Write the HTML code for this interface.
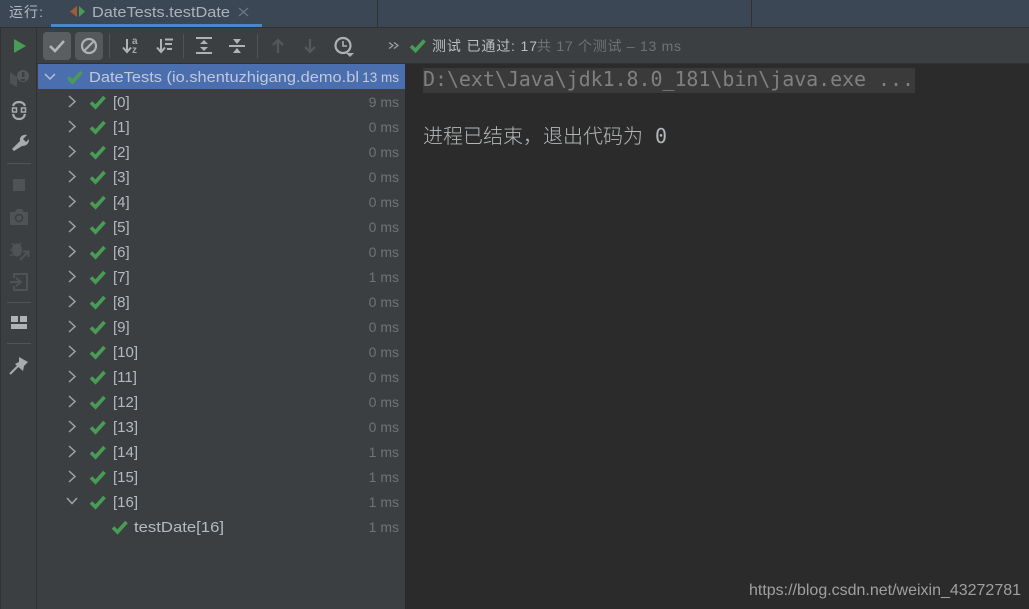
<!DOCTYPE html>
<html><head><meta charset="utf-8"><style>
html,body{margin:0;padding:0;background:#2b2b2b;width:1029px;height:609px;overflow:hidden}
svg{display:block}
text{font-family:"Liberation Sans","Noto Sans CJK SC",sans-serif}
.t{font-size:15px;fill:#b4bac0}
.m{font-size:14px;fill:#6f7375;text-anchor:end}
</style></head><body>
<svg width="1029" height="609" viewBox="0 0 1029 609" xmlns="http://www.w3.org/2000/svg">
<defs>
<path id="c" d="M-7 0.5L-2.5 5L6.5 -5" fill="none" stroke="#499c54" stroke-width="3.6"/>
<path id="r" d="M-3 -5L3 0.5L-3 6" fill="none" stroke="#a0a3a5" stroke-width="1.5"/>
</defs>
<rect width="1029" height="609" fill="#2b2b2b"/>
<!-- header -->
<rect width="1029" height="27" fill="#3c4756"/>
<rect x="51" y="24" width="211" height="3" fill="#4a88c7"/>
<rect x="377" y="0" width="1" height="27" fill="#323232"/>
<rect x="751" y="0" width="1" height="27" fill="#323232"/>
<rect y="27" width="1029" height="1" fill="#323232"/>
<text x="9" y="17" font-size="14" fill="#b4bac0" textLength="34">运行:</text>
<path d="M77 6L70 11.500L77 17Z" fill="#a3593a"/>
<path d="M79 6L85 11.500L79 17Z" fill="#499c54"/>
<text x="92" y="17" font-size="15" fill="#a9b2bb" textLength="138" lengthAdjust="spacingAndGlyphs">DateTests.testDate</text>
<path d="M239 8L248 16M248 8L239 16" stroke="#6b7782" stroke-width="1.200"/>
<!-- panels -->
<rect y="28" width="405" height="581" fill="#3c3f41"/>
<rect x="405" y="28" width="624" height="36" fill="#3c3f41"/>
<rect x="36" y="28" width="1" height="581" fill="#2f3133"/>
<rect x="37" y="63" width="992" height="1" fill="#323232"/>
<rect x="0" y="28" width="1" height="581" fill="#323232"/>
<!-- left rail -->
<path d="M14 39V53L26 46Z" fill="#499c54"/>
<path d="M10 72L17 77V87L10 83Z" fill="#4f5253"/>
<circle cx="23" cy="76" r="6" fill="#55585a"/><rect x="22" y="72" width="2.500" height="5" fill="#3c3f41"/><rect x="21" y="79" width="4" height="2" fill="#3c3f41"/>
<g fill="none" stroke="#a8abad" stroke-width="2.200"><path d="M13 106C14 103 16 102 19 102C22 102 24 103 25 106"/><path d="M13 114C14 118 16 119 19 119C22 119 24 118 25 114"/></g>
<rect x="12.500" y="108" width="4" height="4" fill="none" stroke="#a8abad" stroke-width="1.500"/><rect x="21.500" y="108" width="4" height="4" fill="none" stroke="#a8abad" stroke-width="1.500"/>
<path d="M12 149L20 141C19 137 23 134 27 135L23 139L26 142L29 139C29 144 26 146 22 146L14 151Z" fill="#a8abad"/>
<rect x="7" y="163" width="24" height="1" fill="#515456"/>
<rect x="13" y="179" width="12" height="12" fill="#505355"/>
<path d="M10 212H15L17 209H22L24 212H28V225H10Z" fill="#505355"/><circle cx="19" cy="218" r="3.500" fill="none" stroke="#3c3f41" stroke-width="1.500"/>
<ellipse cx="17" cy="250" rx="5" ry="6.500" fill="#505355"/><path d="M12 243L14 246M21 243L19 246M10 250H13M10 255H13" stroke="#505355" stroke-width="1.500"/><path d="M20 260L28 252M23 251.500H28.500V257" fill="none" stroke="#505355" stroke-width="2"/>
<path d="M14 278V274H27V290H14V286" fill="none" stroke="#505355" stroke-width="2"/><path d="M10 282H19M16 278L21 282L16 286" fill="none" stroke="#505355" stroke-width="2"/>
<rect x="7" y="302" width="24" height="1" fill="#515456"/>
<path d="M11 316H18V322H11ZM20 316H27V322H20ZM11 324H27V329H11Z" fill="#b0b3b5"/>
<rect x="7" y="343" width="24" height="1" fill="#515456"/>
<path d="M19 357L28 362L24 366L23 371L15 364L19 362Z" fill="#a8abad"/><path d="M10 374L18 366" stroke="#a8abad" stroke-width="2"/>
<!-- toolbar -->
<rect x="43" y="32" width="28" height="28" rx="4" fill="#5b5e60"/>
<rect x="75" y="32" width="28" height="28" rx="4" fill="#56595b"/>
<path d="M50 46L55 51L64 41" fill="none" stroke="#b4b7b9" stroke-width="2.500"/>
<circle cx="89" cy="46" r="7" fill="none" stroke="#aeb1b3" stroke-width="2.200"/><path d="M84.500 50.500L93.500 41.500" stroke="#aeb1b3" stroke-width="2.200"/>
<rect x="109" y="34" width="1" height="24" fill="#515456"/>
<g fill="none" stroke="#b0b3b5" stroke-width="2"><path d="M127 39V52M123 47.500L127 52L131 47.500"/><path d="M161 39V52M157 47.500L161 52L165 47.500"/></g>
<text x="132" y="44" font-size="10" font-weight="bold" fill="#a5a8aa">a</text><text x="132" y="53" font-size="10" font-weight="bold" fill="#a5a8aa">z</text>
<path d="M165 39.500H173M165 44H172M167 49H172" stroke="#b0b3b5" stroke-width="2" fill="none"/>
<rect x="183" y="34" width="1" height="24" fill="#515456"/>
<path d="M196 38H212M196 53H212" stroke="#b0b3b5" stroke-width="2"/><path d="M200 44L204 40L208 44ZM200 47L204 51L208 47Z" fill="#b0b3b5"/>
<path d="M229 46H245" stroke="#b0b3b5" stroke-width="2"/><path d="M233 39H241L237 44ZM233 53H241L237 48Z" fill="#b0b3b5"/>
<rect x="257" y="34" width="1" height="24" fill="#515456"/>
<g fill="none" stroke="#55585a" stroke-width="2.200"><path d="M278 53V40M273 45L278 40L283 45"/><path d="M310 39V52M305 47L310 52L315 47"/></g>
<circle cx="343" cy="45.500" r="7.500" fill="none" stroke="#aeb1b3" stroke-width="2.200"/><path d="M343 41V46H347" fill="none" stroke="#aeb1b3" stroke-width="1.600"/><path d="M346 53H354L350 57Z" fill="#aeb1b3"/>
<path d="M389 42.500L393 45.500L389 48.500M394 42.500L398 45.500L394 48.500" fill="none" stroke="#a0a3a5" stroke-width="1.200"/>
<use href="#c" x="418" y="45.500"/>
<text x="432" y="51" font-size="14" fill="#bcbfc1" textLength="105">测试 已通过: 17</text>
<text x="537" y="51" font-size="14" fill="#6f7375" textLength="144">共 17 个测试 – 13 ms</text>
<!-- tree -->
<rect x="38" y="64" width="367" height="25" fill="#4b6eaf"/>
<path d="M45 74L50 79L55 74" fill="none" stroke="#b4c0d6" stroke-width="1.500"/>
<use href="#c" x="75" y="77"/>
<text x="89" y="82" font-size="15" fill="#c0c9da" textLength="270" lengthAdjust="spacingAndGlyphs">DateTests (io.shentuzhigang.demo.bl</text>
<text x="399" y="82" class="m" style="fill:#c5cddc;font-size:13.500px">13 ms</text>

<use href="#r" x="72" y="101"/><use href="#c" x="98" y="102"/><text x="113" y="107" class="t">[0]</text><text x="399" y="107" class="m">9 ms</text>
<use href="#r" x="72" y="126"/><use href="#c" x="98" y="127"/><text x="113" y="132" class="t">[1]</text><text x="399" y="132" class="m">0 ms</text>
<use href="#r" x="72" y="151"/><use href="#c" x="98" y="152"/><text x="113" y="157" class="t">[2]</text><text x="399" y="157" class="m">0 ms</text>
<use href="#r" x="72" y="176"/><use href="#c" x="98" y="177"/><text x="113" y="182" class="t">[3]</text><text x="399" y="182" class="m">0 ms</text>
<use href="#r" x="72" y="201"/><use href="#c" x="98" y="202"/><text x="113" y="207" class="t">[4]</text><text x="399" y="207" class="m">0 ms</text>
<use href="#r" x="72" y="226"/><use href="#c" x="98" y="227"/><text x="113" y="232" class="t">[5]</text><text x="399" y="232" class="m">0 ms</text>
<use href="#r" x="72" y="251"/><use href="#c" x="98" y="252"/><text x="113" y="257" class="t">[6]</text><text x="399" y="257" class="m">0 ms</text>
<use href="#r" x="72" y="276"/><use href="#c" x="98" y="277"/><text x="113" y="282" class="t">[7]</text><text x="399" y="282" class="m">1 ms</text>
<use href="#r" x="72" y="301"/><use href="#c" x="98" y="302"/><text x="113" y="307" class="t">[8]</text><text x="399" y="307" class="m">0 ms</text>
<use href="#r" x="72" y="326"/><use href="#c" x="98" y="327"/><text x="113" y="332" class="t">[9]</text><text x="399" y="332" class="m">0 ms</text>
<use href="#r" x="72" y="351"/><use href="#c" x="98" y="352"/><text x="113" y="357" class="t">[10]</text><text x="399" y="357" class="m">0 ms</text>
<use href="#r" x="72" y="376"/><use href="#c" x="98" y="377"/><text x="113" y="382" class="t">[11]</text><text x="399" y="382" class="m">0 ms</text>
<use href="#r" x="72" y="401"/><use href="#c" x="98" y="402"/><text x="113" y="407" class="t">[12]</text><text x="399" y="407" class="m">0 ms</text>
<use href="#r" x="72" y="426"/><use href="#c" x="98" y="427"/><text x="113" y="432" class="t">[13]</text><text x="399" y="432" class="m">0 ms</text>
<use href="#r" x="72" y="451"/><use href="#c" x="98" y="452"/><text x="113" y="457" class="t">[14]</text><text x="399" y="457" class="m">1 ms</text>
<use href="#r" x="72" y="476"/><use href="#c" x="98" y="477"/><text x="113" y="482" class="t">[15]</text><text x="399" y="482" class="m">1 ms</text>
<path d="M67 498L72 503.500L77 498" fill="none" stroke="#a0a3a5" stroke-width="1.500"/><use href="#c" x="98" y="502"/><text x="113" y="507" class="t">[16]</text><text x="399" y="507" class="m">1 ms</text>
<use href="#c" x="120" y="527"/><text x="134" y="532" class="t" textLength="90" lengthAdjust="spacingAndGlyphs">testDate[16]</text><text x="399" y="532" class="m">1 ms</text>
<!-- console -->
<rect x="423" y="68" width="492" height="25" fill="#3a3a3a"/>
<text x="423" y="86" font-size="20" style="font-family:'DejaVu Sans Mono',monospace" fill="#808080" textLength="491">D:\ext\Java\jdk1.8.0_181\bin\java.exe ...</text>
<text x="423" y="143" font-size="20" fill="#b4b7b9" style="font-family:'Noto Sans CJK SC',sans-serif;font-weight:300">进程已结束，退出代码为</text>
<text x="655" y="143" font-size="20" fill="#b4b7b9" style="font-family:'DejaVu Sans Mono',monospace">0</text>
<text x="749" y="595" font-size="16" fill="#a0a0a0" textLength="272" lengthAdjust="spacingAndGlyphs">https://blog.csdn.net/weixin_43272781</text>
</svg>
</body></html>
